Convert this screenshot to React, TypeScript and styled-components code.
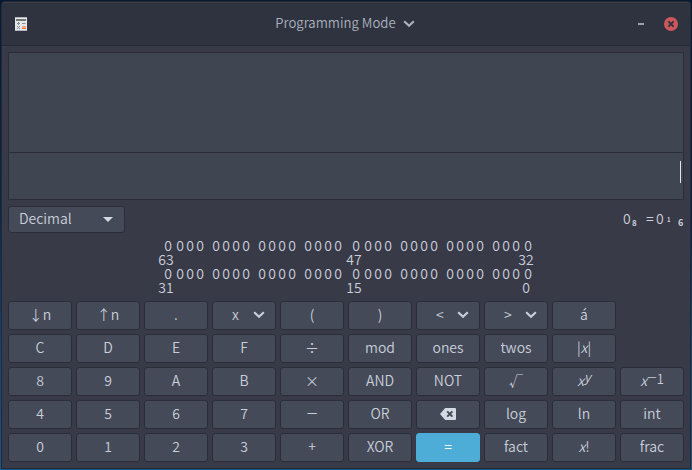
import React from "react";
import styled, { createGlobalStyle, css } from "styled-components";

const GlobalStyle = createGlobalStyle`
  *, *::before, *::after { box-sizing: border-box; }
  html, body { margin: 0; padding: 0; }
  body {
    width: 692px;
    height: 470px;
    overflow: hidden;
    background: linear-gradient(#051b33 0%, #06294c 45%, #0c4876 75%, #135889 100%);
  }
`;

const Window = styled.div`
  display: flex;
  flex-direction: column;
  width: 690px;
  height: 468px;
  margin: 1px 0 0 1px;
  border: 1px solid #262934;
  border-radius: 4px 4px 0 0;
  background: #383a48;
  color: #c9ced9;
  font: 400 14px/20px "Noto Sans CJK SC", "Noto Sans", sans-serif;
  font-weight: 350;
`;

const TitleBar = styled.header`
  display: grid;
  grid-template-columns: 60px 1fr 60px;
  align-items: center;
  flex: none;
  height: 44px;
  padding: 0 12px 0 13px;
  border-bottom: 1px solid #262934;
  border-top: 1px solid #3a3c48;
  border-radius: 3px 3px 0 0;
  background: #2e333f;
  svg { display: block; }
`;

const TitleButton = styled.div`
  display: flex;
  align-items: center;
  justify-content: center;
  gap: 7px;
  padding: 0 3px 2px 0;
  color: #aab0bd;
  font-size: 13.2px;
  white-space: nowrap;
  svg { transform: translateY(1px); }
`;

const WindowControls = styled.div`
  display: flex;
  align-items: center;
  justify-content: flex-end;
  gap: 20px;
`;

const MinimizeMark = styled.span`
  width: 6px;
  height: 2px;
  background: #9b9fa8;
`;

const Content = styled.main`
  display: flex;
  flex-direction: column;
  padding: 6px 6px 0;
`;

const Display = styled.section`
  height: 148px;
  border: 1px solid #2b2e39;
  background: #404651;
`;

const History = styled.div`
  height: 100px;
  border-bottom: 1px solid #2b2e39;
`;

const Entry = styled.div`
  display: flex;
  justify-content: flex-end;
  height: 46px;
  padding: 8px 2px 0 0;
`;

const Caret = styled.span`
  width: 1px;
  height: 22px;
  background: #e0e4ec;
`;

const StatusRow = styled.div`
  display: flex;
  justify-content: space-between;
  align-items: center;
  height: 27px;
  margin-top: 6px;
`;

const raised = css`
  border: 1px solid #2b2e39;
  border-radius: 3px;
  background: #444a58;
`;

const BaseSelect = styled.div`
  ${raised}
  display: flex;
  align-items: center;
  justify-content: space-between;
  width: 117px;
  height: 27px;
  padding: 0 11px 3px 10px;
  svg { transform: translateY(1px); }
`;

const Conversion = styled.div`
  display: grid;
  grid-template-columns: 9px 14px 10px 11px 11px 6px;
  align-items: baseline;
  padding-bottom: 3px;
`;

const BaseMark = styled.span<{ $size: number; $drop: number }>`
  font-size: ${(p) => p.$size}px;
  font-weight: 700;
  line-height: 8px;
  transform: translateY(${(p) => p.$drop}px);
`;

const BitPanel = styled.section`
  display: flex;
  flex-direction: column;
  height: 56px;
  margin: 5px 0 7px 150px;
  line-height: 14px;
`;

const BitRow = styled.div`
  display: flex;
  height: 14px;
  padding-left: 5px;
`;

const BitGroup = styled.div<{ $leading: boolean; $last: boolean; $trailing: boolean }>`
  display: flex;
  margin-right: ${(p) => (p.$trailing ? 8 : 6)}px;
  span { width: 10px; text-align: center; }
  span:first-child { margin-right: ${(p) => (p.$leading ? 2 : 0)}px; }
  span:last-child { margin-left: ${(p) => (p.$last ? 2 : 0)}px; }
`;

const IndexRow = styled.div`
  display: grid;
  grid-template-columns: 188px 172px 16px;
  height: 14px;
  span { width: 16px; text-align: center; }
`;

const Keypad = styled.section`
  display: grid;
  grid-template-columns: repeat(10, 64px);
  grid-auto-rows: 29px;
  gap: 4px;
`;

const Key = styled.button<{ $accent?: boolean; $menu?: boolean }>`
  ${raised}
  display: flex;
  align-items: center;
  justify-content: ${(p) => (p.$menu ? "space-between" : "center")};
  padding: ${(p) => (p.$menu ? "0 10px 3px 19px" : "0 0 3px")};
  color: inherit;
  font: inherit;
  white-space: pre;
  svg { transform: translateY(1px); }
  ${(p) => p.$accent && css`border-color: #4dadd7; background: #4dadd7; color: #fff;`}
`;

const Var = styled.i`
  font-style: italic;
`;

const Power = styled.span`
  font-size: 13px;
  line-height: 12px;
  transform: translateY(-3px);
`;

const Minus = styled.span<{ $size?: number }>`
  font-size: ${(p) => p.$size ?? 20}px;
  font-weight: 300;
  line-height: 12px;
`;

const Chevron = () => (
  <svg width="12" height="8" viewBox="0 0 12 8" fill="none" stroke="currentColor" strokeWidth="2.2">
    <path d="M1.2 1.2 L6 5.8 L10.8 1.2" />
  </svg>
);

const CalculatorIcon = () => (
  <svg width="12" height="14" viewBox="0 0 12 14">
    <rect width="12" height="14" fill="#e4e7ec" />
    <rect width="12" height="1" fill="#b5b8bf" />
    <rect y="13" width="12" height="1" fill="#b5b8c4" />
    <rect x="1" y="2" width="10" height="2" fill="#75796f" />
    <path d="M2 6.5h3M3.5 5v3M7 6.5h3.5" stroke="#8c8f90" fill="none" />
    <path d="M2 9l3 3M5 9l-3 3" stroke="#8c8f90" fill="none" />
    <rect x="7" y="9" width="4" height="3" fill="#f3a37d" />
    <rect x="7" y="11" width="4" height="1" fill="#ee7a43" />
  </svg>
);

const CloseIcon = () => (
  <svg width="14" height="14" viewBox="0 0 14 14">
    <circle cx="7" cy="7" r="7" fill="#cc575d" />
    <path d="M4.4 4.4l5.2 5.2M9.6 4.4l-5.2 5.2" stroke="#2e333f" strokeWidth="1.9" />
  </svg>
);

const BackspaceIcon = () => (
  <svg width="16" height="12" viewBox="0 0 16 12">
    <path d="M5.2 0H15a1 1 0 0 1 1 1v10a1 1 0 0 1-1 1H5.2L0 6z" fill="#d3dae3" />
    <path d="M7.2 3.4l5.2 5.2M12.4 3.4l-5.2 5.2" stroke="#444a58" strokeWidth="2" />
  </svg>
);

const DownTriangle = () => (
  <svg width="10" height="5" viewBox="0 0 10 5">
    <path d="M0 0h10L5 5z" fill="#d3dae3" />
  </svg>
);

type KeySpec = { id: string; label: React.ReactNode; menu?: boolean; accent?: boolean };

const plain = (...labels: string[]): KeySpec[] => labels.map((l) => ({ id: l, label: l }));

const KEY_ROWS: (KeySpec | null)[][] = [
  [
    ...plain("↓n", "↑n", "."),
    { id: "superscript", label: "x", menu: true },
    ...plain("(", ")"),
    { id: "shift-left", label: "<", menu: true },
    { id: "shift-right", label: ">", menu: true },
    ...plain("á"),
    null,
  ],
  [
    ...plain("C", "D", "E", "F", "÷", "mod", "ones", "twos"),
    { id: "abs", label: <>|<Var>x</Var>|</> },
    null,
  ],
  [
    ...plain("8", "9", "A", "B", "×", "AND", "NOT", "√"),
    { id: "pow", label: <><Var>x</Var><Power><Var>y</Var></Power></> },
    { id: "inverse", label: <><Var>x</Var><Power><Minus $size={18}>−</Minus>1</Power></> },
  ],
  [
    ...plain("4", "5", "6", "7"),
    { id: "minus", label: <Minus>−</Minus> },
    ...plain("OR"),
    { id: "backspace", label: <BackspaceIcon /> },
    ...plain("log", "ln", "int"),
  ],
  [
    ...plain("0", "1", "2", "3", "+", "XOR"),
    { id: "equals", label: "=", accent: true },
    ...plain("fact"),
    { id: "factorial", label: <><Var>x</Var>!</> },
    ...plain("frac"),
  ],
];

const Bits = () => (
  <BitRow>
    {Array.from({ length: 8 }, (_, g) => (
      <BitGroup key={g} $leading={g % 4 === 0} $trailing={g % 4 === 3} $last={g === 7}>
        {Array.from({ length: 4 }, (_, b) => <span key={b}>0</span>)}
      </BitGroup>
    ))}
  </BitRow>
);

const Indices = ({ values }: { values: number[] }) => (
  <IndexRow>{values.map((v) => <span key={v}>{v}</span>)}</IndexRow>
);

export default function App() {
  return (
    <>
      <GlobalStyle />
      <Window>
        <TitleBar>
          <CalculatorIcon />
          <TitleButton>Programming Mode <Chevron /></TitleButton>
          <WindowControls><MinimizeMark /><CloseIcon /></WindowControls>
        </TitleBar>
        <Content>
          <Display>
            <History />
            <Entry><Caret /></Entry>
          </Display>
          <StatusRow>
            <BaseSelect>Decimal <DownTriangle /></BaseSelect>
            <Conversion>
              <span>0</span><BaseMark $size={8} $drop={2}>8</BaseMark>
              <span>=</span><span>0</span>
              <BaseMark $size={6} $drop={-2}>1</BaseMark><BaseMark $size={9} $drop={2}>6</BaseMark>
            </Conversion>
          </StatusRow>
          <BitPanel>
            <Bits />
            <Indices values={[63, 47, 32]} />
            <Bits />
            <Indices values={[31, 15, 0]} />
          </BitPanel>
          <Keypad>
            {KEY_ROWS.flatMap((row, r) =>
              row.map((k, c) =>
                k ? (
                  <Key key={k.id} $accent={k.accent} $menu={k.menu}>
                    {k.label}
                    {k.menu && <Chevron />}
                  </Key>
                ) : (
                  <span key={`${r}-${c}`} />
                )
              )
            )}
          </Keypad>
        </Content>
      </Window>
    </>
  );
}
